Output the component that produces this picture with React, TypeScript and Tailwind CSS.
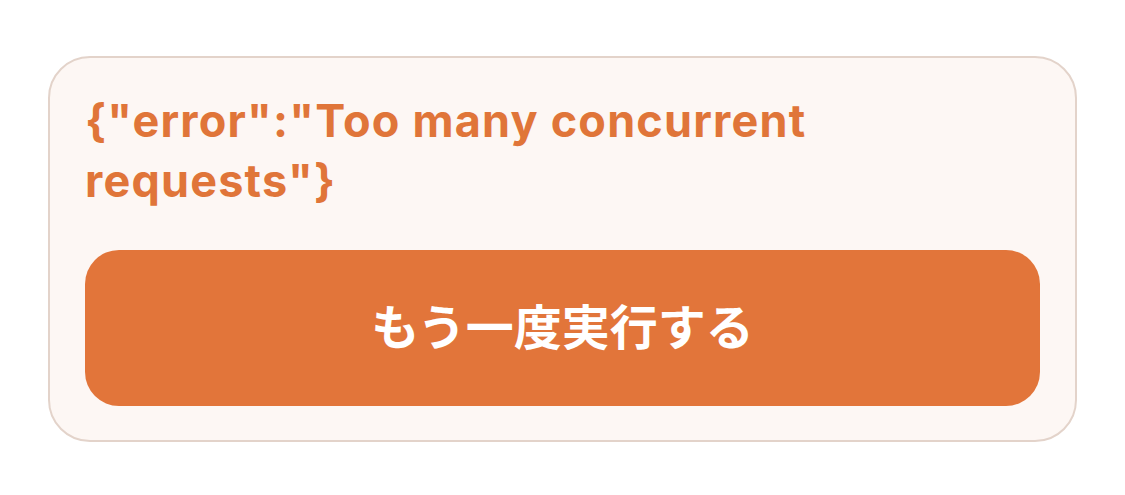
import React from "react";

export default function App() {
  return (
    <div className="min-h-screen bg-white pl-[48px] pt-[56px]" style={{ fontFamily: 'Inter, "Noto Sans CJK JP", sans-serif' }}>
      <div className="w-[1029px] h-[386px] rounded-[42px] border-2 border-[#e3d3ca] bg-[#fdf7f4] px-[35px] pt-[33px] flex flex-col">
        <p className="text-[45px] leading-[60px] tracking-[1.2px] font-bold text-[#e07539]">
          {'{"error":"Too many concurrent'}
          <br />
          {'requests"}'}
        </p>
        <button className="mt-[39px] h-[156px] w-full rounded-[34px] bg-[#e2753a] text-white text-[48px] font-bold">
          もう一度実行する
        </button>
      </div>
    </div>
  );
}
